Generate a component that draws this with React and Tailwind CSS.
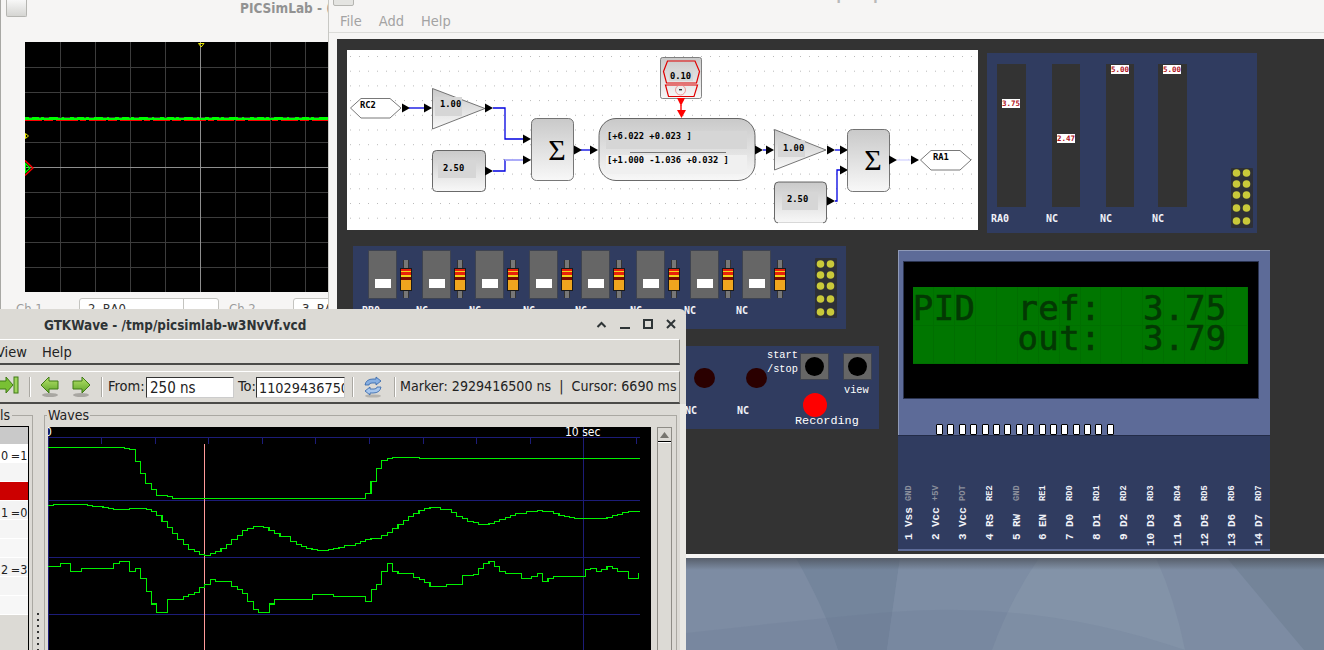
import React from 'react';

const sans = "font-['DejaVu_Sans',sans-serif] [font-stretch:condensed]";
const mono = "font-['DejaVu_Sans_Mono',monospace]";
const slab = "font-['Liberation_Mono',monospace]";

// traces are read off at 2.272x horizontally and 3x vertically
const TRACES = [
  'M109,82 H283 V85 H295 V88 H307 V124 H319 V160 H331 V190 H344 V208 H356 V226 H380 V229 H392 V235 H830 V220 H843 V184 H855 V146 H867 V121 H880 V115 H892 V112 H953 V115 H1453',
  'M109,256 H122 V253 H198 V256 H210 V259 H234 V262 H246 V265 H258 V268 H295 V265 H332 V268 H344 V274 H356 V286 H368 V304 H380 V322 H392 V340 H404 V358 H416 V373 H428 V388 H441 V394 H453 V403 H465 V406 H478 V400 H490 V394 H502 V385 H514 V373 H526 V358 H539 V346 H551 V331 H563 V325 H575 V319 H599 V322 H611 V331 H624 V340 H636 V349 H660 V364 H673 V373 H685 V379 H697 V385 H709 V388 H721 V391 H746 V388 H758 V385 H770 V382 H782 V376 H807 V370 H819 V364 H831 V358 H843 V355 H867 V346 H880 V337 H892 V325 H904 V313 H916 V301 H928 V289 H940 V280 H952 V271 H964 V265 H977 V262 H1001 V268 H1025 V277 H1037 V289 H1050 V295 H1062 V304 H1075 V307 H1087 V313 H1111 V310 H1123 V304 H1135 V298 H1148 V292 H1160 V286 H1172 V280 H1196 V274 H1221 V271 H1233 V274 H1257 V280 H1270 V286 H1282 V289 H1294 V292 H1306 V295 H1379 V292 H1391 V286 H1403 V283 H1415 V277 H1428 V274 H1453',
  'M109,439 H137 V430 H161 V454 H185 V445 H258 V430 H271 V424 H295 V454 H307 V445 H319 V475 H332 V514 H344 V552 H356 V577 H380 V538 H417 V529 H429 V523 H441 V517 H453 V502 H465 V493 H478 V478 H490 V484 H526 V499 H539 V508 H551 V520 H563 V544 H575 V568 H587 V577 H612 V552 H624 V538 H710 V523 H758 V529 H830 V544 H844 V508 H856 V493 H867 V454 H880 V430 H892 V454 H904 V460 H940 V472 H953 V478 H965 V487 H977 V499 H1014 V493 H1050 V466 H1075 V463 H1087 V445 H1099 V430 H1111 V424 H1123 V439 H1135 V454 H1148 V460 H1185 V475 H1208 V469 H1221 V460 H1233 V484 H1245 V475 H1258 V469 H1330 V448 H1342 V445 H1355 V454 H1367 V448 H1379 V439 H1391 V445 H1403 V454 H1428 V475 H1451 V460',
];
const TICKS = [231, 353, 474, 596, 717, 840, 962, 1082, 1205, 1326, 1447];

function Wallpaper() {
  return (
    <svg className="absolute left-0 top-0" width="1324" height="650" viewBox="0 0 1324 650">
      <defs>
        <linearGradient id="wallShade" x1="0" y1="0" x2="0" y2="1">
          <stop offset="0" stopColor="#4a4f58" stopOpacity="0.75" />
          <stop offset="1" stopColor="#4a4f58" stopOpacity="0" />
        </linearGradient>
      </defs>
      <rect width="1324" height="650" fill="#7d8ca3" />
      <path d="M796,558 Q825,610 838,650 L887,650 L900,558 Z" fill="#74859c" />
      <path d="M900,558 L887,650 L992,650 Q1010,600 1039,558 Z" fill="#7d8da4" />
      <path d="M1039,558 Q1010,600 992,650 L1185,650 Q1175,600 1156,558 Z" fill="#8393a8" />
      <path d="M1227,558 L1304,650 L1324,650 L1324,558 Z" fill="#748499" />
      <path d="M686,633 Q800,620 890,612 Q1040,600 1185,650 L686,650 Z" fill="#5f6f88" fillOpacity="0.13" />
      <rect x="686" y="558" width="638" height="12" fill="url(#wallShade)" />
    </svg>
  );
}

function ScopeWindow() {
  const vLines = [60, 95, 130, 165, 235, 270, 305];
  const hLines = [67, 92, 117, 142, 192, 217, 242, 267];
  return (
    <div className="absolute left-0 top-0 w-[328px] h-[312px] bg-[#f6f5f4] border-l border-[#a8a8a4] overflow-hidden">
      <div className="absolute left-[5px] -top-[2px] w-[21px] h-[19px] rounded-[2px] border border-[#b5b5b1] border-t-[#5b7fb5] bg-linear-to-b from-[#fafafa] to-[#d5d5d2]" />
      <div className={`absolute left-[239px] top-0 h-[16px] leading-[16px] whitespace-nowrap text-[13.5px] font-bold text-[#929292] ${sans}`}>
        PICSimLab - (
      </div>
      <svg className="absolute left-[24px] top-[42px] block bg-black" width="303" height="250" viewBox="25 42 303 250">
        {vLines.map((x) => (
          <line key={x} x1={x + 0.5} y1="42" x2={x + 0.5} y2="292" stroke="#3c3c3c" />
        ))}
        {hLines.map((y) => (
          <line key={y} x1="25" y1={y + 0.5} x2="328" y2={y + 0.5} stroke="#3c3c3c" />
        ))}
        <line x1="200.5" y1="42" x2="200.5" y2="292" stroke="#8e8e8e" />
        <line x1="25" y1="167.5" x2="328" y2="167.5" stroke="#8e8e8e" />
        <line x1="25" y1="120.5" x2="328" y2="120.5" stroke="#ff0000" strokeDasharray="17 2 9 3 22 2 6 3" />
        <rect x="25" y="118" width="303" height="2" fill="#00ff00" />
        <line x1="25" y1="117.5" x2="328" y2="117.5" stroke="#00ff00" strokeDasharray="4 3 7 2 3 5 9 4 2 6" />
        <path d="M198.5,43.5 H204 L201.2,47 Z" fill="none" stroke="#e8e800" />
        <path d="M25.5,133.5 L28.5,136 L25.5,138.5 Z" fill="none" stroke="#e8e800" />
        <path d="M25,160.5 L33,168 L25,175.5" fill="none" stroke="#ff0000" strokeWidth="1.3" />
        <path d="M25.5,163.5 L30,168 L25.5,172.5 Z" fill="none" stroke="#00ff00" strokeWidth="1.2" />
      </svg>
      <div className={`absolute left-[15px] top-[299px] text-[13px] text-[#9c9c9c] ${sans}`}>Ch 1</div>
      <div className="absolute left-[78px] top-[298px] flex w-[140px] h-[22px] rounded-[3px] border border-[#c4c4c0] bg-white">
        <div className={`flex-1 pl-[8px] text-[13px] whitespace-pre text-[#333] ${sans}`}>2  RA0</div>
        <div className="w-[35px] border-l border-[#c4c4c0]" />
      </div>
      <div className={`absolute left-[228px] top-[299px] text-[13px] text-[#9c9c9c] ${sans}`}>Ch 2</div>
      <div className="absolute left-[292px] top-[298px] w-[60px] h-[22px] rounded-[3px] border border-[#c4c4c0] bg-white">
        <div className={`pl-[8px] text-[13px] whitespace-pre text-[#333] ${sans}`}>3  RA1</div>
      </div>
    </div>
  );
}

function PinHeader({ rows }) {
  return (
    <svg width="22" height="60" viewBox="0 0 22 60" className="block">
      <rect width="22" height="60" rx="1" fill="#2e3036" />
      {rows.map((y) => (
        <g key={y}>
          <circle cx="5.5" cy={y} r="3.8" fill="#c9c93a" />
          <circle cx="15.5" cy={y} r="3.8" fill="#c9c93a" />
        </g>
      ))}
    </svg>
  );
}

function BlockDiagram() {
  const Arrow = ({ x, y }) => <path d={`M${x},${y - 4.5} L${x + 8},${y} L${x},${y + 4.5} Z`} fill="#000" />;
  const label = { fontFamily: 'DejaVu Sans Mono, monospace', fontSize: 8.8, fontWeight: 700 };
  const wire = { fill: 'none', stroke: '#0000e0', strokeWidth: 1.3 };
  return (
    <svg className="absolute left-[10px] top-[11px] block" width="631" height="180" viewBox="347 50 631 180">
      <defs>
        <linearGradient id="blockFill" x1="0" y1="0" x2="0" y2="1">
          <stop offset="0" stopColor="#c9c9c9" />
          <stop offset="1" stopColor="#f8f8f8" />
        </linearGradient>
        <pattern id="gridDots" x="350" y="56" width="9" height="14.7" patternUnits="userSpaceOnUse">
          <rect width="1" height="1" fill="#b9b9b9" />
        </pattern>
      </defs>
      <rect x="347" y="50" width="631" height="180" fill="#fff" />
      <rect x="347" y="50" width="631" height="180" fill="url(#gridDots)" />

      {/* input tag */}
      <path d="M350.5,108 L361,98.5 H390 L401,108 L390,118 H361 Z" fill="#fff" stroke="#555" strokeWidth="0.8" />
      <text x="360" y="108" style={label}>RC2</text>
      <Arrow x={402} y={108} />
      <line x1="409" y1="108" x2="425" y2="108" {...wire} />
      <Arrow x={424} y={108} />

      {/* first gain */}
      <path d="M432.5,88.5 L485,108.5 L432.5,129 Z" fill="url(#blockFill)" stroke="#555" strokeWidth="0.8" />
      <rect x="435" y="97" width="27" height="19" fill="#d6d6d6" />
      <text x="440" y="107" style={label}>1.00</text>
      <Arrow x={485} y={108} />
      <path d="M493,108 H505 V139 H524" {...wire} />
      <Arrow x={523} y={139} />

      {/* first offset */}
      <rect x="432.5" y="150.5" width="53" height="41" rx="4" fill="url(#blockFill)" stroke="#444" strokeWidth="0.8" />
      <rect x="438" y="160" width="38" height="18" fill="#d6d6d6" />
      <text x="443" y="171" style={label}>2.50</text>
      <Arrow x={485} y={171} />
      <path d="M493,171 H505 V160 H524" {...wire} />
      <path d="M505,160 H524" fill="none" stroke="#dcdcff" strokeWidth="1.4" />
      <Arrow x={523} y={160} />

      {/* first sum */}
      <rect x="531.5" y="118.5" width="42" height="62" rx="5" fill="url(#blockFill)" stroke="#555" strokeWidth="0.8" />
      <text x="557" y="160" textAnchor="middle" fontFamily="Liberation Serif, serif" fontSize="30">Σ</text>
      <Arrow x={574} y={150} />
      <line x1="581" y1="150" x2="591" y2="150" {...wire} />
      <Arrow x={590} y={150} />

      {/* transfer function */}
      <rect x="599" y="118.5" width="156" height="62" rx="17" fill="url(#blockFill)" stroke="#444" strokeWidth="0.8" />
      <rect x="606" y="131" width="141" height="18" fill="#d6d6d6" />
      <rect x="606" y="155" width="141" height="19" fill="#f0f0f0" />
      <text x="607" y="139" style={label}>[+6.022 +0.023 ]</text>
      <line x1="630" y1="152.5" x2="726" y2="152.5" stroke="#777" strokeWidth="1.2" />
      <text x="607" y="163" style={label}>[+1.000 -1.036 +0.032 ]</text>

      {/* saturation block above */}
      <rect x="660.5" y="57.5" width="41" height="41" rx="2" fill="url(#blockFill)" stroke="#666" strokeWidth="0.8" />
      <path d="M663.5,71.5 L667.5,61 H695 L699.5,71.5 L696.5,83 H666.5 Z" fill="none" stroke="#e00000" strokeWidth="1.2" />
      <path d="M665.5,85 H697.5 L694,96.5 H668.5 Z" fill="none" stroke="#e00000" strokeWidth="1.2" />
      <rect x="669" y="70" width="24" height="11" fill="#d6d6d6" />
      <text x="680.5" y="79" textAnchor="middle" style={label}>0.10</text>
      <circle cx="680.5" cy="90" r="5" fill="none" stroke="#f08080" strokeWidth="0.8" />
      <rect x="679" y="89" width="3" height="1.4" fill="#333" />
      <path d="M677,98 H685 L681,106 Z" fill="#ff0000" />
      <line x1="681" y1="105" x2="681" y2="111" stroke="#ff0000" strokeWidth="1.4" />
      <path d="M677,110 H686 L681.5,118 Z" fill="#ff0000" />

      <Arrow x={755} y={150} />
      <line x1="763" y1="150" x2="767" y2="150" {...wire} />
      <Arrow x={766} y={150} />

      {/* second gain */}
      <path d="M774.5,129.5 L826,150 L774.5,170 Z" fill="url(#blockFill)" stroke="#555" strokeWidth="0.8" />
      <rect x="778" y="140" width="27" height="17" fill="#d6d6d6" />
      <text x="783" y="151" style={label}>1.00</text>
      <Arrow x={827} y={150} />
      <line x1="835" y1="150" x2="841" y2="150" {...wire} />
      <Arrow x={840} y={150} />

      {/* second offset, cut off at the bottom */}
      <rect x="774.5" y="182" width="52" height="41" rx="4" fill="url(#blockFill)" stroke="#444" strokeWidth="0.8" />
      <rect x="782" y="192" width="36" height="18" fill="#d6d6d6" />
      <rect x="778" y="222.5" width="45" height="2" fill="#fff" />
      <text x="787" y="202" style={label}>2.50</text>
      <Arrow x={827} y={201} />
      <path d="M835,201 H837 V170 H841" {...wire} />
      <Arrow x={840} y={170} />

      {/* second sum */}
      <rect x="847.5" y="129.5" width="42" height="62" rx="5" fill="url(#blockFill)" stroke="#555" strokeWidth="0.8" />
      <text x="873" y="170" textAnchor="middle" fontFamily="Liberation Serif, serif" fontSize="30">Σ</text>
      <Arrow x={889} y={160} />
      <line x1="897" y1="160" x2="912" y2="160" stroke="#dcdcff" strokeWidth="1.6" />
      <Arrow x={911} y={160} />
      <path d="M920.5,160 L931,150.5 H960 L971,160 L960,170 H931 Z" fill="#fff" stroke="#555" strokeWidth="0.8" />
      <text x="933" y="160" style={label}>RA1</text>
    </svg>
  );
}

function MeterBoard() {
  const meters = [
    { name: 'RA0', value: 3.75, box: 'w-[29px]', gap: '' },
    { name: 'NC', value: 2.47, box: 'w-[28px]', gap: 'ml-[26px]' },
    { name: 'NC', value: 5.0, box: 'w-[28px]', gap: 'ml-[26px]' },
    { name: 'NC', value: 5.0, box: 'w-[29px]', gap: 'ml-[24px]' },
  ];
  return (
    <div className="absolute left-[650px] top-[14px] w-[270px] h-[180px] bg-[#303c60] pt-[11px] pl-[10px]">
      <div className="flex">
        {meters.map((m, i) => (
          <div key={i} className={m.gap}>
            <div className={`relative h-[143px] bg-[#333333] ${m.box}`}>
              <div
                className={`absolute left-[5px] w-[18px] h-[9px] bg-white text-center text-[7.5px] leading-[9px] font-bold text-[#b01020] ${mono}`}
                style={{ top: Math.round(1 + (5 - m.value) * 27.2) }}
              >
                {m.value.toFixed(2)}
              </div>
            </div>
            <div className={`-ml-[6px] mt-[6px] h-[12px] text-[10px] leading-[12px] font-bold text-[#f0f2f8] ${mono}`}>{m.name}</div>
          </div>
        ))}
      </div>
      <div className="absolute left-[244px] top-[115px]">
        <PinHeader rows={[5, 16, 27, 40, 53]} />
      </div>
    </div>
  );
}

function Resistor() {
  return (
    <div className="relative w-[12px] h-[38px] mt-[10px]">
      <div className="absolute left-[3px] top-0 w-[6px] h-[38px] bg-[#777777] border-x border-[#333]" />
      <div className="absolute left-0 top-[8px] w-[12px] h-[23px] flex flex-col border border-[#1a1a1a] bg-[#efa51e]">
        <div className="h-[2px] bg-[#e8200a]" />
        <div className="h-[1px] bg-[#f3d21c]" />
        <div className="h-[3px] bg-[#e8200a]" />
        <div className="h-[2px] bg-[#f3d21c]" />
        <div className="h-[3px] bg-[#7a0a00]" />
      </div>
    </div>
  );
}

function SwitchBoard() {
  const switches = [
    { name: 'RB0', gap: 'ml-[15px]' },
    { name: 'NC', gap: 'ml-[10px]' },
    { name: 'NC', gap: 'ml-[9px]' },
    { name: 'NC', gap: 'ml-[10px]' },
    { name: 'NC', gap: 'ml-[8px]' },
    { name: 'NC', gap: 'ml-[11px]' },
    { name: 'NC', gap: 'ml-[10px]' },
    { name: 'NC', gap: 'ml-[8px]' },
  ];
  return (
    <div className="absolute left-[16px] top-[207px] w-[493px] h-[83px] bg-[#303c60] pt-[4px]">
      <div className="flex">
        {switches.map((s, i) => (
          <div key={i} className={s.gap}>
            <div className="flex gap-[3px]">
              <div className="flex justify-center w-[29px] h-[49px] bg-[#666666] border border-[#3e4350] rounded-[1px] pt-[28px]">
                <div className="w-[16px] h-[9px] bg-white" />
              </div>
              <Resistor />
            </div>
            <div className={`-ml-[6px] mt-[6px] h-[12px] text-[10px] leading-[12px] font-bold text-[#f0f2f8] ${mono}`}>{s.name}</div>
          </div>
        ))}
      </div>
      <div className="absolute left-[462px] top-[12px]">
        <PinHeader rows={[6, 17, 28, 41, 54]} />
      </div>
    </div>
  );
}

function ButtonBoard() {
  const Key = () => (
    <div className="flex items-center justify-center w-[29px] h-[27px] bg-[#666666] border border-[#3e4350]">
      <div className="w-[19px] h-[19px] rounded-full bg-black" />
    </div>
  );
  return (
    <div className="absolute left-[320px] top-[307px] w-[222px] h-[83px] bg-[#303c60]">
      <div className="absolute left-[37px] top-[22px] flex gap-[31px]">
        <div className="w-[21px] h-[20px] rounded-full bg-[#2a0000]" />
        <div className="w-[21px] h-[20px] rounded-full bg-[#2a0000]" />
      </div>
      <div className={`absolute left-[28px] top-[59px] text-[10px] leading-[12px] font-bold text-[#f0f2f8] ${mono}`}>NC</div>
      <div className={`absolute left-[80px] top-[59px] text-[10px] leading-[12px] font-bold text-[#f0f2f8] ${mono}`}>NC</div>
      <div className={`absolute left-[110px] top-[3px] text-[10.3px] leading-[13.5px] text-white ${slab}`}>
        <div>start</div>
        <div>/stop</div>
      </div>
      <div className="absolute left-[143px] top-[7px] flex gap-[14px]">
        <Key />
        <Key />
      </div>
      <div className={`absolute left-[187px] top-[38px] text-[10.3px] leading-[13px] text-white ${slab}`}>view</div>
      <div className="absolute left-[146px] top-[47px] w-[24px] h-[24px] rounded-full bg-[#ff0000]" />
      <div className={`absolute left-[138px] top-[68px] text-[11.8px] leading-[14px] text-white ${slab}`}>Recording</div>
    </div>
  );
}

function Lcd() {
  const rows = ['PID  ref:  3.75 ', '     out:  3.79 '];
  const columns = [
    ['1', 'Vss', 'GND', true], ['2', 'Vcc', '+5V', true], ['3', 'Vcc', 'POT', true], ['4', 'RS', 'RE2'],
    ['5', 'RW', 'GND', true], ['6', 'EN', 'RE1'], ['7', 'D0', 'RD0'], ['8', 'D1', 'RD1'], ['9', 'D2', 'RD2'],
    ['10', 'D3', 'RD3'], ['11', 'D4', 'RD4'], ['12', 'D5', 'RD5'], ['13', 'D6', 'RD6'], ['14', 'D7', 'RD7'],
  ];
  return (
    <div className="absolute left-[561px] top-[211px] w-[372px] h-[301px] flex flex-col">
      <div className="h-[185px] bg-[#5d6b98] border-t border-l border-[#8f9ab8] pt-[10px] pl-[4px]">
        <div className="w-[356px] h-[138px] bg-black border border-[#2a3350] pt-[25px] pl-[9px]">
          <div className={`grid grid-cols-[repeat(16,20.94px)] grid-rows-[38.5px_38.5px] w-[335px] h-[77px] bg-[#006f00] ${mono}`}>
            {rows.map((row, r) =>
              row.split('').map((ch, i) => (
                <div
                  key={`${r}-${i}`}
                  className="flex items-center justify-center bg-[#007600] mr-px mb-px text-[34px] text-[#033803] [-webkit-text-stroke:0.6px_#033803]"
                >
                  <span className={r === 0 ? 'relative top-[2px] block h-[28px] leading-[28px]' : 'relative -top-[6px] block h-[28px] leading-[28px]'}>{ch.trim()}</span>
                </div>
              ))
            )}
          </div>
        </div>
        <div className="flex gap-[4.4px] ml-[33px] mt-[25px]">
          {Array.from({ length: 16 }, (_, i) => (
            <div key={i} className="w-[7px] h-[11px] bg-white border border-black rounded-[1px]" />
          ))}
        </div>
      </div>
      <div className="h-[116px] bg-[#303c60] border-t border-[#232c48] border-b-2 border-b-[#5d6b98] pt-[48px] flex">
        <div className="flex -ml-[2px]">
          {columns.map(([num, pin, link, dim]) => (
            <div key={num} className={`w-[26.9px] shrink-0 flex flex-col items-center font-bold ${slab}`}>
              <div className={`h-[17px] text-[8.7px] leading-[11px] [writing-mode:vertical-rl] rotate-180 ${dim ? 'text-[#8b8f9c]' : 'text-[#f0f2f8]'}`}>{link}</div>
              <div className="mt-[6px] h-[20px] text-[11px] leading-[11px] text-[#f0f2f8] [writing-mode:vertical-rl] rotate-180">{pin}</div>
              <div className="mt-[6px] h-[14px] text-[11px] leading-[11px] text-right text-[#f0f2f8] [writing-mode:vertical-rl] rotate-180">{num}</div>
            </div>
          ))}
        </div>
      </div>
    </div>
  );
}

function SpareWindow() {
  return (
    <div className="absolute left-[328px] top-0 w-[996px] h-[558px] bg-[#f6f5f4] border-l border-[#c8c8c4] flex flex-col overflow-hidden">
      <div className="absolute left-[4px] -top-[12px] w-[21px] h-[18px] rounded-[2px] border border-[#b5b5b1] bg-[#e4e4e1]" />
      <div className={`absolute left-[409px] -top-[15px] whitespace-nowrap text-[14px] font-bold text-[#b9b9b9] ${sans}`}>PICSimLab - Spare parts</div>
      <div className={`flex gap-[17px] h-[33px] pt-[11px] pl-[11px] border-b border-[#dcdcd9] text-[14.5px] leading-[20px] text-[#a3a3a3] ${sans}`}>
        <span>File</span>
        <span>Add</span>
        <span>Help</span>
      </div>
      <div className="relative ml-[8px] mt-[6px] h-[515px] bg-[#333333]">
        <BlockDiagram />
        <MeterBoard />
        <SwitchBoard />
        <ButtonBoard />
        <Lcd />
      </div>
    </div>
  );
}

function GreenArrow({ flip }) {
  return (
    <svg width="20" height="22" viewBox="0 0 20 22" className={flip ? 'block -scale-x-100' : 'block'}>
      <defs>
        <linearGradient id="arrowGreen" x1="0" y1="0" x2="0" y2="1">
          <stop offset="0" stopColor="#b7e36a" />
          <stop offset="1" stopColor="#5fa52a" />
        </linearGradient>
      </defs>
      <ellipse cx="10" cy="19" rx="8" ry="2" fill="#a9a7a2" />
      <path d="M1,9 L9,1 V5 H18 V13 H9 V17 Z" fill="url(#arrowGreen)" stroke="#3f7a14" strokeWidth="1" />
    </svg>
  );
}

function ToolSep({ className }) {
  return <div className={`w-[2px] h-[20px] shrink-0 bg-white border-l border-[#aaa8a2] ${className}`} />;
}

function GtkToolbar() {
  return (
    <div className={`mt-[6px] flex items-center w-[680px] h-[33px] border-t border-white border-b-2 border-b-[#4a4a48] border-r border-r-[#8e8c86] text-[14.5px] text-[#222] whitespace-nowrap overflow-hidden ${sans}`}>
      <svg width="19" height="22" viewBox="0 0 19 22" className="block shrink-0">
        <path d="M-4,5 H6 V1 L13,9 L6,17 V13 H-4 Z" fill="#79c034" stroke="#3f7a14" />
        <rect x="14" y="1" width="4" height="16" fill="#9ed45c" stroke="#3f7a14" />
      </svg>
      <ToolSep className="ml-[10px]" />
      <div className="ml-[9px]"><GreenArrow /></div>
      <div className="ml-[11px]"><GreenArrow flip /></div>
      <ToolSep className="ml-[10px]" />
      <span className="ml-[5px] w-[37px] shrink-0">From:</span>
      <div className="ml-px w-[88px] h-[21px] shrink-0 bg-white border border-t-[#333] border-l-[#333] border-r-[#ccc] border-b-[#ccc] pl-[3px] text-[15px] leading-[21px] overflow-hidden">250 ns</div>
      <span className="ml-[4px] w-[18px] shrink-0">To:</span>
      <div className="w-[89px] h-[21px] shrink-0 bg-white border border-t-[#333] border-l-[#333] border-r-[#ccc] border-b-[#ccc] pl-[2px] text-[14.3px] leading-[21px] overflow-hidden">11029436750</div>
      <ToolSep className="ml-[7px]" />
      <svg width="20" height="22" viewBox="0 0 20 22" className="ml-[9px] block shrink-0">
        <ellipse cx="10" cy="20" rx="8" ry="1.6" fill="#b5b3ae" />
        <path d="M2,9 Q3,3 10,3 L13,3 V1 L18,5 L13,9 V7 H9 Q6,7 6,9 Z" fill="#86aee0" stroke="#2f62a8" strokeWidth="0.8" />
        <path d="M18,11 Q17,17 10,17 L7,17 V19 L2,15 L7,11 V13 H11 Q14,13 14,11 Z" fill="#a7c6ec" stroke="#2f62a8" strokeWidth="0.8" />
      </svg>
      <ToolSep className="ml-[11px]" />
      <span className="ml-[4px] whitespace-pre text-[14.1px]">Marker: 2929416500 ns  |  Cursor: 6690 ms</span>
    </div>
  );
}

function SignalList() {
  const rows = [
    { text: '0 =1', style: 'bg-white' },
    { text: '', style: 'bg-[#f5f5f5]' },
    { text: '', style: 'bg-[#cc0000]' },
    { text: '1 =0', style: 'bg-[#f3f3f3]' },
    { text: '', style: 'bg-[#f5f5f5]' },
    { text: '', style: 'bg-[#f7f7f7]' },
    { text: '2 =3', style: 'bg-[#f3f3f3]' },
    { text: '', style: 'bg-[#f5f5f5]' },
    { text: '', style: 'bg-[#f7f7f7]' },
  ];
  return (
    <div className="w-[29px] h-full border-r border-black">
      <div className="h-[18px] bg-[#c9c9c9] border-t border-black" />
      {rows.map((row, i) => (
        <div key={i} className={`h-[19px] border-b border-white pl-px text-[12.5px] leading-[23px] [word-spacing:-1px] whitespace-pre overflow-hidden text-[#222] ${row.style} ${sans}`}>
          {row.text}
        </div>
      ))}
    </div>
  );
}

function WavePane() {
  return (
    <div className="relative w-[603px] h-[223px] bg-black overflow-hidden">
      <svg className="absolute left-0 top-0 block" width="603" height="223" viewBox="109 21 1370 669" preserveAspectRatio="none" shapeRendering="crispEdges">
        <path d="M109,21 V690" fill="none" stroke="#1c1c78" vectorEffect="non-scaling-stroke" />
        <path d="M109,52 H1453" fill="none" stroke="#1c1c78" vectorEffect="non-scaling-stroke" />
        {TICKS.map((x) => (
          <path key={x} d={`M${x},52 V72`} fill="none" stroke="#1c1c78" vectorEffect="non-scaling-stroke" />
        ))}
        <path d="M1326,21 V690" fill="none" stroke="#1c1c78" vectorEffect="non-scaling-stroke" />
        {[241, 412, 583].map((y) => (
          <path key={y} d={`M109,${y} H1453`} fill="none" stroke="#1c1c78" vectorEffect="non-scaling-stroke" />
        ))}
        <path d="M465,72 V690" fill="none" stroke="#ff9a9a" vectorEffect="non-scaling-stroke" />
        {TRACES.map((d) => (
          <path key={d.slice(0, 12)} d={d} fill="none" stroke="#00f000" strokeWidth="1.2" vectorEffect="non-scaling-stroke" />
        ))}
      </svg>
      <div className={`absolute -left-[3px] -top-[1px] text-[12px] leading-[13px] text-white ${sans}`}>0</div>
      <div className={`absolute left-[517px] -top-[1px] text-[12px] leading-[13px] whitespace-pre text-white ${sans}`}>10 sec</div>
    </div>
  );
}

function GtkWaveWindow() {
  return (
    <div className="absolute left-0 top-[309px] w-[686px] h-[341px] bg-[#dcdad5] rounded-tr-md flex flex-col overflow-hidden">
      <div className="relative h-[30px] shrink-0">
        <div className={`absolute left-[44px] top-[7px] whitespace-nowrap text-[13.4px] font-bold text-[#2e3436] ${sans}`}>
          GTKWave - /tmp/picsimlab-w3NvVf.vcd
        </div>
        <svg className="absolute left-[590px] top-[8px]" width="90" height="16" viewBox="590 317 90 16" fill="none" stroke="#2e3436" strokeWidth="2">
          <path d="M597.5,327 L601.5,323 L605.5,327" />
          <path d="M620,328 H630" />
          <rect x="644" y="320" width="8" height="8" />
          <path d="M667,320 L675,328 M675,320 L667,328" />
        </svg>
      </div>
      <div className={`h-[26px] w-[680px] shrink-0 flex items-center pt-[2px] border-t border-white border-b-2 border-b-[#4a4a48] border-r border-r-[#8e8c86] text-[14.5px] text-[#222] ${sans}`}>
        <span className="-ml-[4px]">View</span>
        <span className="ml-[15px]">Help</span>
      </div>
      <GtkToolbar />
      <div className="relative flex flex-1 mt-[11px] w-[680px]">
        {/* signals frame */}
        <div className="w-[33px] border-t border-r border-[#aaa8a2] pt-[10px]">
          <SignalList />
        </div>
        <div className={`absolute left-0 -top-[9px] bg-[#dcdad5] pr-[2px] text-[14px] leading-[18px] text-[#222] ${sans}`}>ls</div>
        {/* pane handle */}
        <div className="absolute left-[37px] top-[198px] flex flex-col gap-[4px]">
          {[0, 1, 2, 3, 4, 5, 6, 7].map((i) => (
            <div key={i} className="w-[2px] h-[2px] bg-[#333]" />
          ))}
        </div>
        {/* waves frame */}
        <div className="flex ml-[11px] w-[633px] border-t border-l border-r border-[#aaa8a2] pt-[11px] pl-[3px]">
          <WavePane />
          <div className="ml-[6px] w-[15px] flex flex-col border-x border-[#8e8c86]">
            <div className="h-[15px] flex items-center justify-center border-t border-[#8e8c86] border-b border-b-black bg-[#dcdad5]">
              <svg width="9" height="6" viewBox="0 0 9 6"><path d="M4.5,0 L9,6 H0 Z" fill="#77756f" /></svg>
            </div>
            <div className="flex-1 border-t border-white" />
          </div>
        </div>
        <div className={`absolute left-[47px] -top-[9px] bg-[#dcdad5] px-px text-[14px] leading-[18px] text-[#222] ${sans}`}>Waves</div>
      </div>
      <div className="absolute right-0 top-[95px] bottom-0 w-[6px] bg-[#e9e8e4]" />
    </div>
  );
}

export default function App() {
  return (
    <div className="relative w-[1324px] h-[650px] overflow-hidden">
      <Wallpaper />
      <ScopeWindow />
      <SpareWindow />
      <GtkWaveWindow />
    </div>
  );
}
